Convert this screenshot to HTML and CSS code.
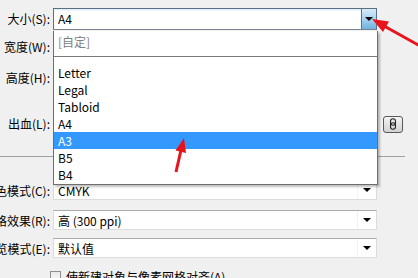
FILE: index.html
```html
<!DOCTYPE html>
<html>
<head>
<meta charset="utf-8">
<link rel="stylesheet" href="styles.css">
</head>
<body>
<div class="dialog">
  <div class="row r1">
    <span class="label">大小(S):</span>
    <div class="select focus"><span class="val">A4</span><span class="btn"><i class="tri"></i></span></div>
  </div>
  <div class="row r2"><span class="label">宽度(W):</span><div class="field"></div></div>
  <div class="row r3"><span class="label">高度(H):</span><div class="field"></div></div>
  <div class="row r4">
    <span class="label">出血(L):</span><div class="field"></div>
    <span class="link"><svg width="8" height="12" viewBox="0 0 8 12"><rect x="1.5" y="0.8" width="5" height="6.4" rx="2.5" fill="none" stroke="#222" stroke-width="1.1"/><rect x="1.5" y="4.8" width="5" height="6.4" rx="2.5" fill="none" stroke="#222" stroke-width="1.1"/></svg></span>
  </div>
  <div class="sep"></div>
  <div class="row r5">
    <span class="label low">颜色模式(C):</span>
    <div class="select"><span class="val low">CMYK</span><span class="drop"><i class="tri"></i></span></div>
  </div>
  <div class="row r6">
    <span class="label low">栅格效果(R):</span>
    <div class="select"><span class="val low">高 (300 ppi)</span><span class="drop"><i class="tri"></i></span></div>
  </div>
  <div class="row r7">
    <span class="label low">预览模式(E):</span>
    <div class="select"><span class="val low">默认值</span><span class="drop"><i class="tri"></i></span></div>
  </div>
  <div class="check-row"><span class="box"></span><span class="ctext">使新建对象与像素网格对齐(A)</span></div>

  <div class="list">
    <div class="item custom">[自定]</div>
    <div class="divider"></div>
    <div class="item">Letter</div>
    <div class="item">Legal</div>
    <div class="item">Tabloid</div>
    <div class="item">A4</div>
    <div class="item sel">A3</div>
    <div class="item">B5</div>
    <div class="item">B4</div>
  </div>

  <svg class="arrows" width="418" height="278" viewBox="0 0 418 278">
    <line x1="420" y1="46" x2="385" y2="26.5" stroke="#e8141b" stroke-width="3"/>
    <polygon points="372,19 389,21.5 383,32" fill="#e8141b"/>
    <line x1="176" y1="172" x2="181" y2="150" stroke="#e8141b" stroke-width="3"/>
    <polygon points="184,138 186,153 175.5,150.5" fill="#e8141b"/>
  </svg>
</div>
</body>
</html>
```
FILE: styles.css
```css
html, body {
  margin: 0;
  padding: 0;
  background: #f0f0f0;
  overflow: hidden;
}
.dialog {
  position: relative;
  width: 418px;
  height: 278px;
  padding-top: 8px;
  box-sizing: border-box;
  font-family: "Noto Sans CJK SC", "Noto Sans", sans-serif;
  font-size: 12px;
  color: #000;
  overflow: hidden;
}
.row {
  display: flex;
  align-items: center;
  height: 20px;
}
.label {
  width: 50px;
  flex: none;
  display: flex;
  justify-content: flex-end;
  white-space: nowrap;
  overflow: hidden;
  margin-right: 3px;
  line-height: 20px;
}
.low { padding-top: 2px; }
.r1 { height: 22px; }
.r2 { margin-top: 7px; }
.r3 { margin-top: 11px; }
.r4 { margin-top: 26px; }
.sep {
  margin-top: 22px;
  width: 405px;
  height: 1px;
  background: #a0a0a0;
}
.r5 { margin-top: 23px; }
.r6 { margin-top: 10px; }
.r7 { margin-top: 8px; }

.field {
  width: 324px;
  height: 20px;
  box-sizing: border-box;
  background: #fff;
  border: 1px solid #c8c8c8;
}
.select {
  width: 324px;
  height: 20px;
  box-sizing: border-box;
  background: #fff;
  border: 1px solid #dcdcdc;
  border-top-color: #ababab;
  display: flex;
  align-items: center;
  position: relative;
}
.select .val {
  flex: 1;
  padding-left: 4px;
  line-height: 18px;
}
.select .drop {
  width: 18px;
  height: 18px;
  border-left: 1px solid #f2f2f2;
  display: flex;
  align-items: center;
  justify-content: center;
}
.tri {
  width: 0;
  height: 0;
  border-left: 4px solid transparent;
  border-right: 4px solid transparent;
  border-top: 4px solid #000;
}
.select.focus {
  height: 22px;
  border: 1px solid #5d6f83;
  border-bottom-color: #7a8591;
  box-shadow: inset 0 1px 0 #dff0fb, inset 0 2px 0 #f1f9fe;
}
.select.focus .val { line-height: 20px; }
.select.focus .btn {
  width: 14px;
  height: 20px;
  border-left: 1px solid #3b79a8;
  background: linear-gradient(#d6ebf8, #a8d2ef 50%, #6eb1dd);
  display: flex;
  align-items: center;
  justify-content: center;
}
.link {
  margin-left: 6px;
  width: 20px;
  height: 17px;
  box-sizing: border-box;
  border: 1px solid #5a5a5a;
  border-radius: 3px;
  background: linear-gradient(#f4f4f4, #d2d2d2);
  display: flex;
  align-items: center;
  justify-content: center;
}
.check-row {
  margin-top: 9px;
  display: flex;
  align-items: center;
  height: 18px;
  padding-left: 50px;
}
.box {
  width: 11px;
  height: 11px;
  box-sizing: border-box;
  border: 1px solid #8e8f8f;
  background: linear-gradient(#e9e9e9, #fafafa);
  margin-right: 5px;
}
.ctext { line-height: 18px; padding-top: 2px; }

.list {
  position: absolute;
  left: 53px;
  top: 31px;
  width: 325px;
  height: 154px;
  box-sizing: border-box;
  background: #fff;
  border: 1px solid #6e6e6e;
  border-top: none;
  box-shadow: 2px 2px 2px rgba(0,0,0,0.25);
  padding-top: 2px;
}
.item {
  height: 17px;
  line-height: 17px;
  padding-left: 4px;
  white-space: nowrap;
}
.item.custom { color: #808080; }
.item.sel {
  background: #3399ff;
  color: #fff;
}
.divider {
  height: 1px;
  background: #7a7a7a;
  margin: 6px 0 7px;
}
.arrows {
  position: absolute;
  left: 0;
  top: 0;
  pointer-events: none;
}
```
